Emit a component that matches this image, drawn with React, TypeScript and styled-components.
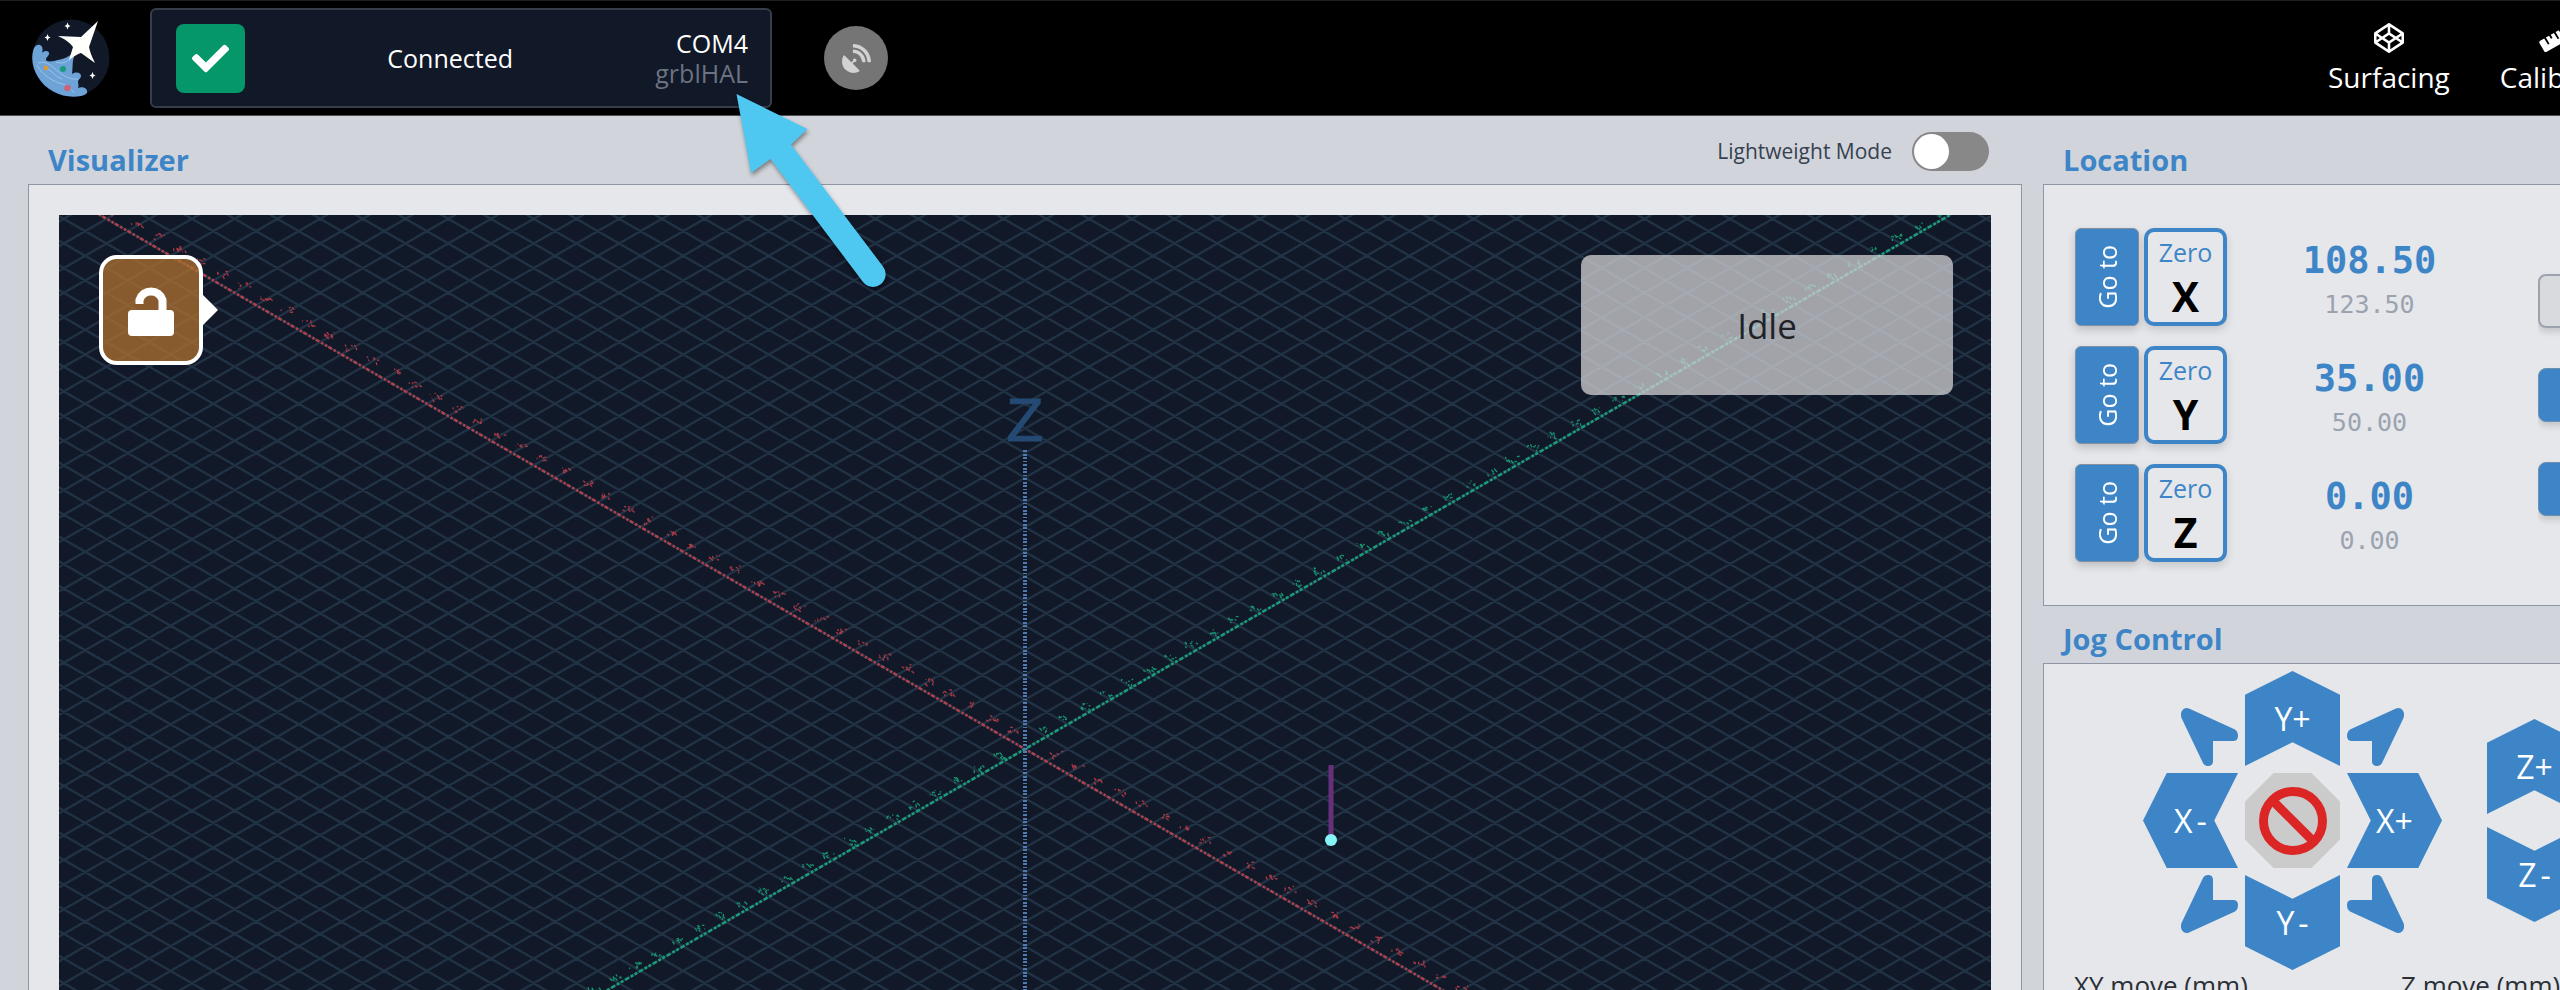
import React from "react";
import styled, { createGlobalStyle } from "styled-components";
import { FaCheck, FaCodepen, FaRuler, FaSatelliteDish } from "react-icons/fa";

const blue = "#3e85c7";

const GlobalStyle = createGlobalStyle`
  *, *::before, *::after { box-sizing: border-box; }
  body {
    margin: 0;
    background: #d1d5db;
    font-family: "Open Sans", "Noto Sans", sans-serif;
    color: #1f2937;
  }
  button { font: inherit; padding: 0; border: 0; cursor: pointer; }
`;

const Shell = styled.div`
  position: relative;
  display: flex;
  flex-direction: column;
  height: 100vh;
  overflow: hidden;
`;

/* ---------- top bar ---------- */

const TopBar = styled.header`
  display: flex;
  align-items: center;
  flex: none;
  height: 116px;
  padding-left: 32px;
  background: #000;
  border-top: 1px solid #1d1f20;
  border-bottom: 1px solid #4b4d52;
  overflow: hidden;
`;

const Logo = styled.svg`
  flex: none;
  width: 78px;
  height: 78px;
`;

const Connection = styled.div`
  display: flex;
  align-items: center;
  flex: none;
  width: 622px;
  height: 100px;
  margin-left: 40px;
  padding: 0 22px 0 24px;
  border: 2px solid #373d49;
  border-radius: 6px;
  background: #111827;
  color: #fff;
  font-size: 25px;
  line-height: 30px;
`;

const StatusIcon = styled.span`
  display: flex;
  align-items: center;
  justify-content: center;
  width: 69px;
  height: 69px;
  border-radius: 8px;
  background: #059669;
  font-size: 37px;
`;

const StatusText = styled.span`
  flex: 1;
  text-align: center;
`;

const PortInfo = styled.div`
  display: flex;
  flex-direction: column;
  align-items: flex-end;
`;

const Firmware = styled.span`
  color: #6b7280;
`;

const RemoteButton = styled.button`
  display: flex;
  align-items: center;
  justify-content: center;
  flex: none;
  width: 64px;
  height: 64px;
  margin-left: 52px;
  border-radius: 50%;
  background: #757575;
  color: #d2d2d2;
  font-size: 29px;
`;

const Tools = styled.nav`
  display: flex;
  gap: 50px;
  width: 232px;
  margin-left: auto;
  padding-top: 4px;
  overflow: hidden;
`;

const ToolLink = styled.a`
  display: flex;
  flex-direction: column;
  align-items: center;
  flex: none;
  gap: 4px;
  color: #fff;
  font-size: 28px;
  line-height: 40px;
  text-decoration: none;
  svg { height: 30px; }
`;

/* ---------- page areas ---------- */

const Main = styled.main`
  display: grid;
  grid-template-columns: minmax(0, 1fr) 517px;
  gap: 21px;
  flex: 1;
  min-height: 0;
  padding-left: 28px;
`;

const Column = styled.div`
  display: flex;
  flex-direction: column;
  min-width: 0;
  min-height: 0;
`;

const PanelHeader = styled.div<{ $compact?: boolean }>`
  display: flex;
  align-items: flex-end;
  justify-content: space-between;
  flex: none;
  height: ${(p) => (p.$compact ? 57 : 68)}px;
  padding: 0 33px 4px 20px;
`;

const PanelTitle = styled.h2`
  margin: 0;
  color: ${blue};
  font-size: 29px;
  font-weight: 700;
  line-height: 40px;
`;

const Panel = styled.section<{ $grow?: boolean }>`
  flex: ${(p) => (p.$grow ? "1 0 auto" : "none")};
  border: 1px solid #8f96a3;
  border-right: 0;
  background: #e5e7eb;
`;

/* ---------- visualizer ---------- */

const ModeSwitch = styled.label`
  display: flex;
  align-items: center;
  gap: 20px;
  height: 40px;
  margin-bottom: 9px;
  color: #374151;
  font-size: 21px;
`;

const Switch = styled.input`
  appearance: none;
  width: 77px;
  height: 39px;
  margin: 0;
  padding: 2px;
  border-radius: 20px;
  background: #888;
  cursor: pointer;
  &::before {
    content: "";
    display: block;
    width: 35px;
    height: 35px;
    border-radius: 50%;
    background: #fff;
  }
`;

const VisualizerPanel = styled.section`
  display: flex;
  flex: 1;
  min-height: 0;
  padding: 30px 30px 0;
  border: 1px solid #8f96a3;
  border-bottom: 0;
  background: #e5e7eb;
`;

const Viewport = styled.div`
  position: relative;
  flex: 1;
  overflow: hidden;
  background: #111827;
`;

const Scene = styled.svg`
  display: block;
  width: 100%;
  height: 100%;
`;

const UnlockButton = styled.button`
  position: absolute;
  top: 40px;
  left: 40px;
  display: flex;
  align-items: center;
  justify-content: center;
  width: 104px;
  height: 110px;
  border: 4px solid #fff;
  border-radius: 18px;
  background: rgba(180, 116, 48, 0.73);
  &::after {
    content: "";
    position: absolute;
    left: calc(100% + 3px);
    top: 50%;
    margin-top: -16px;
    border: 16px solid transparent;
    border-left-color: #fff;
    border-right: 0;
  }
`;

const MachineState = styled.div`
  position: absolute;
  top: 40px;
  right: 38px;
  display: flex;
  align-items: center;
  justify-content: center;
  width: 372px;
  height: 140px;
  border-radius: 10px;
  background: rgba(209, 209, 214, 0.75);
  color: #1f2227;
  font-size: 35px;
`;

/* ---------- location ---------- */

const LocationBody = styled.div`
  display: flex;
  justify-content: space-between;
  height: 420px;
  padding: 43px 0 0 31px;
`;

const AxisList = styled.div`
  display: flex;
  flex-direction: column;
  gap: 20px;
`;

const AxisRow = styled.div`
  display: flex;
  gap: 5px;
  height: 98px;
`;

const GoTo = styled.button`
  display: flex;
  align-items: center;
  justify-content: center;
  width: 64px;
  border: 1px solid #8290a0;
  border-radius: 6px;
  background: ${blue};
  box-shadow: 0 4px 8px rgba(0, 0, 0, 0.18);
  color: #fff;
  font-size: 25px;
`;

const Upright = styled.span`
  writing-mode: vertical-rl;
  transform: rotate(180deg);
`;

const Zero = styled.button`
  display: flex;
  flex-direction: column;
  align-items: center;
  justify-content: center;
  width: 83px;
  padding-top: 4px;
  border: 4px solid ${blue};
  border-radius: 10px;
  background: #e5e7eb;
  box-shadow: 0 4px 8px rgba(0, 0, 0, 0.14);
  color: ${blue};
  font-size: 25px;
  line-height: 34px;
`;

const AxisName = styled.strong`
  color: #000;
  font-size: 41px;
  line-height: 54px;
`;

const Readout = styled.div`
  display: flex;
  flex-direction: column;
  align-items: center;
  justify-content: center;
  width: 275px;
  padding-top: 3px;
  font-family: "DejaVu Sans Mono", monospace;
`;

const WorkPosition = styled.output`
  color: ${blue};
  font-size: 37px;
  font-weight: 700;
  line-height: 52px;
`;

const MachinePosition = styled.output`
  color: #9ca3af;
  font-size: 25px;
  line-height: 36px;
`;

const SideButtons = styled.div`
  display: flex;
  flex-direction: column;
  gap: 40px;
  width: 22px;
  padding-top: 46px;
  overflow: hidden;
`;

const SideButton = styled.button<{ $muted?: boolean }>`
  flex: none;
  width: 120px;
  height: 54px;
  border: ${(p) => (p.$muted ? "2px solid #9ca3af" : "1px solid #6f8fb0")};
  border-radius: 8px;
  background: ${(p) => (p.$muted ? "#d8dade" : blue)};
  box-shadow: 0 4px 6px rgba(0, 0, 0, 0.14);
`;

/* ---------- jog control ---------- */

const JogPads = styled.div`
  display: flex;
  align-items: center;
  gap: 45px;
  padding: 7px 0 0 99px;
`;

const XYPad = styled.div`
  display: grid;
  flex: none;
  grid-template-columns: repeat(3, 95px);
  grid-template-rows: repeat(3, 95px);
  gap: 7px;
`;

const ZPad = styled.div`
  display: flex;
  flex-direction: column;
  gap: 13px;
`;

const shapes = {
  up: "50% 0, 100% 25%, 100% 100%, 50% 75%, 0 100%, 0 25%",
  down: "0 0, 50% 25%, 100% 0, 100% 75%, 50% 100%, 0 75%",
  left: "25% 0, 100% 0, 75% 50%, 100% 100%, 25% 100%, 0 50%",
  right: "0 0, 75% 0, 100% 50%, 75% 100%, 0 100%, 25% 50%",
  stop: "30% 0, 70% 0, 100% 30%, 100% 70%, 70% 100%, 30% 100%, 0 70%, 0 30%",
};

const PadButton = styled.button<{ $shape: keyof typeof shapes }>`
  display: flex;
  align-items: center;
  justify-content: center;
  width: 95px;
  height: 95px;
  background: ${(p) => (p.$shape === "stop" ? "#cbcbcb" : blue)};
  clip-path: polygon(${(p) => shapes[p.$shape]});
  color: #fff;
  font-size: 32px;
`;

const Minus = styled.span`
  margin-left: 4px;
`;

const CornerButton = styled.button<{ $v: "start" | "end"; $h: "start" | "end" }>`
  align-self: ${(p) => p.$v};
  justify-self: ${(p) => p.$h};
  width: 57px;
  height: 58px;
  background: none;
  svg {
    display: block;
    transform: scale(${(p) => (p.$h === "end" ? 1 : -1)}, ${(p) => (p.$v === "end" ? 1 : -1)});
  }
`;

const JogSettings = styled.div`
  display: flex;
  padding-left: 30px;
  color: #2b2f36;
  font-size: 26px;
  line-height: 30px;
  white-space: nowrap;
  overflow: hidden;
`;

const JogLabel = styled.span`
  flex: none;
  width: 327px;
`;

const Pointer = styled.svg`
  position: absolute;
  top: 84px;
  left: 726px;
  width: 170px;
  height: 210px;
  filter: drop-shadow(1px 3px 2px rgba(0, 0, 0, 0.4));
`;

/* ---------- drawing data ---------- */

const ORIGIN = { x: 966, y: 534 };
const STEP = { x: 21.36, y: 12.33 };
const SLOPE = STEP.y / STEP.x;

const gridIndexes = Array.from({ length: 141 }, (_, i) => i - 70);

const gridPath = gridIndexes
  .map((i) => {
    const y = ORIGIN.y + i * 2 * STEP.y;
    const left = -200 - ORIGIN.x;
    const right = 2200 - ORIGIN.x;
    return (
      `M-200 ${y + left * SLOPE}L2200 ${y + right * SLOPE}` +
      `M-200 ${y - left * SLOPE}L2200 ${y - right * SLOPE}`
    );
  })
  .join("");

/* Ruler marks are too far away to resolve, so each one is a small cluster of strokes. */
const marks = (direction: 1 | -1, from: number, to: number) => {
  let seed = direction === 1 ? 7 : 23;
  const next = () => {
    seed = (seed * 1103515245 + 12345) % 2147483648;
    return seed / 2147483648;
  };
  let d = "";
  for (let i = from; i <= to; i++) {
    if (i === 0) continue;
    const x = ORIGIN.x + i * STEP.x + (direction === 1 ? 8 : -6);
    const y = ORIGIN.y + direction * i * STEP.y - (direction === 1 ? 6 : 5);
    for (let k = 0; k < 8; k++) {
      const px = x - 5 + next() * 12;
      const py = y - 4 + next() * 6;
      d += `M${px.toFixed(1)} ${py.toFixed(1)}l${(next() * 3).toFixed(1)} ${(next() * 4 - 1).toFixed(1)}`;
    }
  }
  return d;
};

const redMarks = marks(1, -43, 20);
const greenMarks = marks(-1, -20, 43);

const VisualizerScene = () => (
  <Scene viewBox="0 0 1932 775" preserveAspectRatio="xMidYMin slice" aria-hidden="true">
    <path d={gridPath} stroke="#3a5a72" strokeOpacity="0.4" strokeWidth="2.4" fill="none" />
    <g fill="none" strokeWidth="2.5">
      <path
        d={`M${ORIGIN.x - 930} ${ORIGIN.y - 930 * SLOPE}L${ORIGIN.x + 422} ${ORIGIN.y + 422 * SLOPE}`}
        stroke="#ad414d"
        strokeDasharray="2.5 2 2.5 1.5 4 2"
      />
      <path
        d={`M${ORIGIN.x - 422} ${ORIGIN.y + 422 * SLOPE}L${ORIGIN.x + 925} ${ORIGIN.y - 925 * SLOPE}`}
        stroke="#1a9c79"
        strokeDasharray="3 1.5 3 2 4.500 2"
      />
      <path d={redMarks} stroke="#a83945" strokeWidth="1.3" />
      <path d={greenMarks} stroke="#17936f" strokeWidth="1.3" />
      <path d={`M${ORIGIN.x} 235V800`} stroke="#4f7bb0" strokeWidth="4" strokeDasharray="2 2 2 1 2 2 1 2" />
    </g>
    <text
      x={ORIGIN.x}
      y="226"
      textAnchor="middle"
      fontFamily="Liberation Sans, sans-serif"
      fontSize="61"
      fill="#244a74"
      stroke="#244a74"
      strokeWidth="1"
    >
      Z
    </text>
    <path d="M1272 550V622" stroke="#66307a" strokeWidth="5" />
    <circle cx="1272" cy="625" r="6" fill="#86f3f6" />
  </Scene>
);

const BrandLogo = () => (
  <Logo viewBox="0 0 78 78" role="img" aria-label="Home">
    <circle cx="39" cy="39" r="38.5" fill="#111827" />
    <path
      d="M1 32C2 27 5 25 8 26c3 1 3 5 2 8 3-3 7-2 7 0 1 2-3 4-3 6-1 3 6 3 12 1 6-1 10-3 14-6l2 3c-2 5-1 11-2 17 5-3 9-1 9 2 0 2-2 3-3 5 0 3 1 4 0 7 4-2 9 0 9 3 1 3-3 4-6 5C33 80 15 73 6 58 1 50-1 41 1 32z"
      fill="#6ea3d8"
    />
    <path
      d="M6 44c8-2 11 1 16 5 7 6 14 12 24 11M5 46c5 9 12 14 22 18 8 2 11 4 15 10M14 49c6 2 9 9 16 11M24 43c6 2 9 1 14-3"
      fill="none"
      stroke="#9cc3e8"
      strokeWidth="1"
    />
    <circle cx="14" cy="49" r="2.4" fill="#d99a3c" />
    <circle cx="31" cy="50" r="3" fill="#1a9a78" />
    <circle cx="35.500" cy="69" r="3.3" fill="#c8647c" />
    <path d="M66 2 57 28Q58 34 63 44L49 34Q45 35 37 41L41 28Q37 22 26 17L49 18Z" fill="#fffffb" />
    <path
      d="M35.500 3.500l1 2.500 2 1-2 1-1 2.500-1-2.500-2-1 2-1zM15.500 15l1 2.500 2 1-2 1-1 2.500-1-2.500-2-1 2-1zM60.500 53l1 2.500 2 1-2 1-1 2.500-1-2.500-2-1 2-1z"
      fill="#fff"
    />
  </Logo>
);

const CornerArrow = () => (
  <svg width="57" height="58" viewBox="0 0 57 58" aria-hidden="true">
    <path
      d="M8 .5 54 21.500Q57 23.500 57 28Q57 33 52 33H32V53Q32 58 27 58Q23 58 21.500 54L.5 10Q-1 5 1.500 2Q4-1 8 .5Z"
      fill={blue}
    />
  </svg>
);

const axes = [
  { name: "X", work: "108.50", machine: "123.50" },
  { name: "Y", work: "35.00", machine: "50.00" },
  { name: "Z", work: "0.00", machine: "0.00" },
];

export default function App() {
  return (
    <Shell>
      <GlobalStyle />
      <TopBar>
        <BrandLogo />
        <Connection>
          <StatusIcon>
            <FaCheck />
          </StatusIcon>
          <StatusText>Connected</StatusText>
          <PortInfo>
            <span>COM4</span>
            <Firmware>grblHAL</Firmware>
          </PortInfo>
        </Connection>
        <RemoteButton aria-label="Wireless control">
          <FaSatelliteDish />
        </RemoteButton>
        <Tools>
          <ToolLink href="#surfacing">
            <FaCodepen size={30} />
            Surfacing
          </ToolLink>
          <ToolLink href="#calibrate">
            <FaRuler size={38} />
            Calibrate
          </ToolLink>
        </Tools>
      </TopBar>

      <Main>
        <Column>
          <PanelHeader>
            <PanelTitle>Visualizer</PanelTitle>
            <ModeSwitch>
              Lightweight Mode
              <Switch type="checkbox" role="switch" />
            </ModeSwitch>
          </PanelHeader>
          <VisualizerPanel>
            <Viewport>
              <VisualizerScene />
              <UnlockButton aria-label="Unlock machine">
                <svg width="46" height="52" viewBox="0 0 46 52" aria-hidden="true">
                  <path d="M11.500 20V16a12 12 0 0 1 23 0V30" fill="none" stroke="#fff" strokeWidth="8" />
                  <rect y="26" width="46" height="26" rx="4" fill="#fff" />
                </svg>
              </UnlockButton>
              <MachineState>Idle</MachineState>
            </Viewport>
          </VisualizerPanel>
        </Column>

        <Column>
          <PanelHeader>
            <PanelTitle>Location</PanelTitle>
          </PanelHeader>
          <Panel>
            <LocationBody>
              <AxisList>
                {axes.map((axis) => (
                  <AxisRow key={axis.name}>
                    <GoTo>
                      <Upright>Go to</Upright>
                    </GoTo>
                    <Zero>
                      Zero
                      <AxisName>{axis.name}</AxisName>
                    </Zero>
                    <Readout>
                      <WorkPosition>{axis.work}</WorkPosition>
                      <MachinePosition>{axis.machine}</MachinePosition>
                    </Readout>
                  </AxisRow>
                ))}
              </AxisList>
              <SideButtons>
                <SideButton $muted aria-label="Units" />
                <SideButton aria-label="Home" />
                <SideButton aria-label="Park" />
              </SideButtons>
            </LocationBody>
          </Panel>

          <PanelHeader $compact>
            <PanelTitle>Jog Control</PanelTitle>
          </PanelHeader>
          <Panel $grow>
            <JogPads>
              <XYPad>
                <CornerButton $v="end" $h="end" aria-label="Jog X- Y+">
                  <CornerArrow />
                </CornerButton>
                <PadButton $shape="up">Y+</PadButton>
                <CornerButton $v="end" $h="start" aria-label="Jog X+ Y+">
                  <CornerArrow />
                </CornerButton>
                <PadButton $shape="left">
                  X<Minus>-</Minus>
                </PadButton>
                <PadButton $shape="stop" aria-label="Stop">
                  <svg width="68" height="68" viewBox="0 0 68 68" aria-hidden="true">
                    <g fill="none" stroke="#dc2626" strokeWidth="9">
                      <circle cx="34" cy="34" r="29.500" />
                      <path d="M13 13 55 55" />
                    </g>
                  </svg>
                </PadButton>
                <PadButton $shape="right">X+</PadButton>
                <CornerButton $v="start" $h="end" aria-label="Jog X- Y-">
                  <CornerArrow />
                </CornerButton>
                <PadButton $shape="down">
                  Y<Minus>-</Minus>
                </PadButton>
                <CornerButton $v="start" $h="start" aria-label="Jog X+ Y-">
                  <CornerArrow />
                </CornerButton>
              </XYPad>
              <ZPad>
                <PadButton $shape="up">Z+</PadButton>
                <PadButton $shape="down">
                  Z<Minus>-</Minus>
                </PadButton>
              </ZPad>
            </JogPads>
            <JogSettings>
              <JogLabel>XY move (mm)</JogLabel>
              <JogLabel>Z move (mm)</JogLabel>
            </JogSettings>
          </Panel>
        </Column>
      </Main>

      <Pointer viewBox="0 0 170 210" aria-hidden="true">
        <path d="M10.500 10 81.500 45 65 60.500 157 182.500A12.500 12.500 0 0 1 137 198L44.500 75 25 89Z" fill="#4fc8f1" />
      </Pointer>
    </Shell>
  );
}
